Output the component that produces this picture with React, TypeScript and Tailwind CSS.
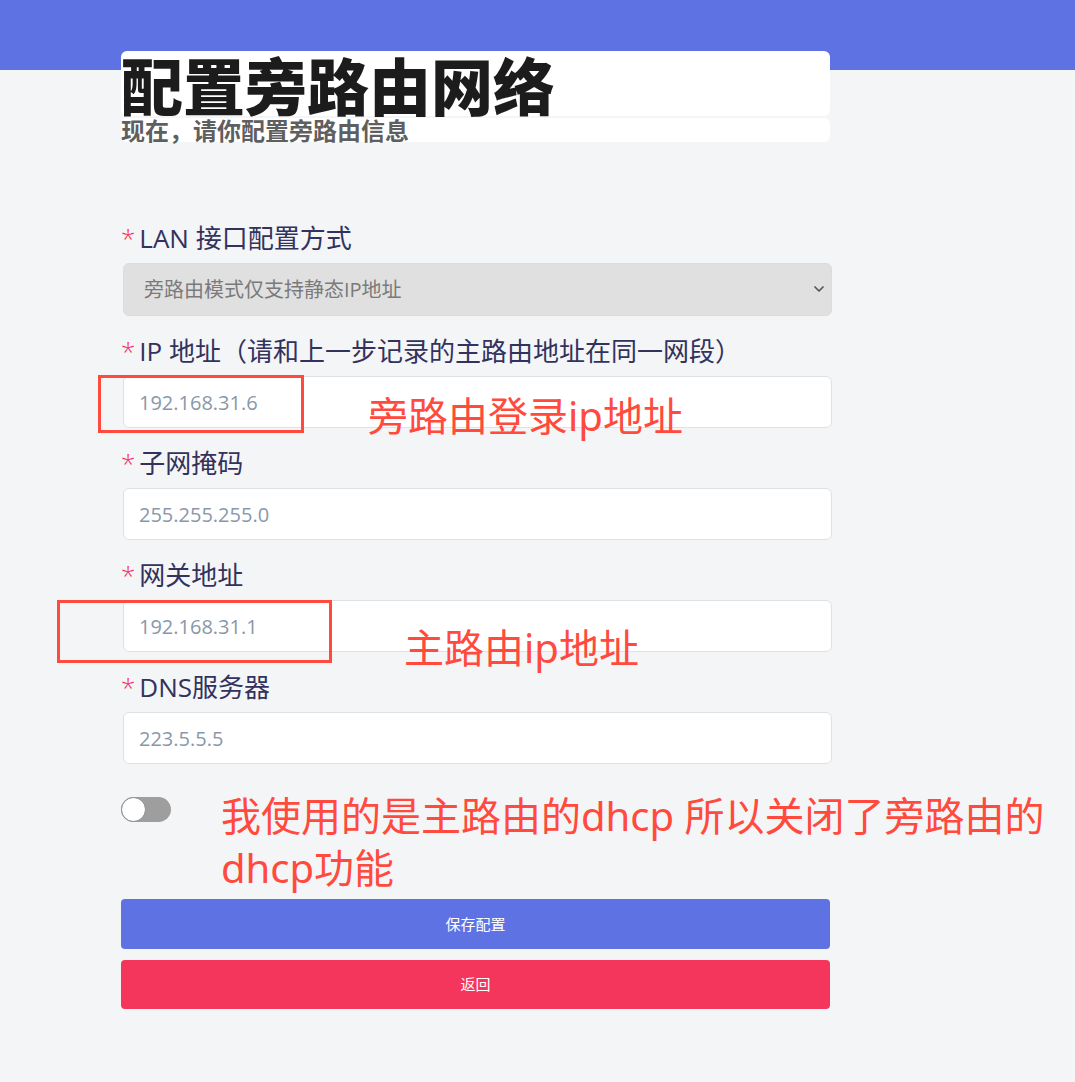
import React from "react"
import { ChevronDown } from "lucide-react"

const FIELDS: { label: string; placeholder: string }[] = [
  { label: "IP 地址（请和上一步记录的主路由地址在同一网段）", placeholder: "192.168.31.6" },
  { label: "子网掩码", placeholder: "255.255.255.0" },
  { label: "网关地址", placeholder: "192.168.31.1" },
  { label: "DNS服务器", placeholder: "223.5.5.5" },
]

const font = "font-['Open_Sans','Noto_Sans_CJK_SC',sans-serif]"

function Label({ text }: { text: string }) {
  return (
    <label className="block h-[30px] text-[26px] leading-[30px] text-[#32325d] mb-[10px] whitespace-nowrap">
      <span className="text-[#f5365c] font-light mr-[4px]">*</span>
      {text}
    </label>
  )
}

export default function App() {
  return (
    <div className={`relative min-h-[1082px] bg-[#f4f5f7] overflow-hidden ${font}`}>
      {/* header band */}
      <div className="h-[70px] bg-[#5e72e4]" />

      <div className="ml-[121px] w-[711px] -mt-[19px] pb-[73px]">
        {/* title */}
        <div className="w-[709px] h-[65px] rounded-md bg-white pt-[2px]">
          <h1 className="text-[62px] leading-[62px] font-black text-[#1c1c1c] whitespace-nowrap font-['Noto_Sans_CJK_SC',sans-serif]">
            配置旁路由网络
          </h1>
        </div>
        <div className="w-[709px] h-[24px] mt-[2px] rounded-md bg-white">
          <p className="text-[24px] leading-[24px] font-bold text-[#5f5f5f] whitespace-nowrap font-['Noto_Sans_CJK_SC',sans-serif]">
            现在，请你配置旁路由信息
          </p>
        </div>

        <form className="mt-[81px] flex flex-col gap-[20px]">
          <div>
            <Label text="LAN 接口配置方式" />
            <div className="relative ml-[2px] h-[53px] rounded-md border border-[#dcdcdc] bg-[#e0e0e0] flex items-center pl-[20px] text-[20px] text-[#7a7a7a]">
              旁路由模式仅支持静态IP地址
              <ChevronDown className="absolute right-[4px] top-[17px] w-[16px] h-[16px] text-[#555]" strokeWidth={2.6} />
            </div>
          </div>

          {FIELDS.map((f) => (
            <div key={f.label}>
              <Label text={f.label} />
              <input
                className="ml-[2px] w-[709px] h-[52px] rounded-md border border-[#dee2e6] bg-white px-[15px] text-[20px] text-[#8898aa] placeholder:text-[#8898aa] outline-none"
                placeholder={f.placeholder}
              />
            </div>
          ))}
        </form>

        {/* dhcp switch */}
        <div className="mt-[33px] w-[50px] h-[25px] rounded-full bg-[#9e9e9e] flex items-center">
          <div className="w-[25px] h-[25px] rounded-full bg-white border border-[#8a8a8a]" />
        </div>

        <div className="mt-[77px] flex flex-col gap-[11px] w-[709px] font-['Noto_Sans_CJK_SC',sans-serif]">
          <button className="h-[50px] rounded-[4px] bg-[#5e72e4] text-white text-[15px]">保存配置</button>
          <button className="h-[49px] rounded-[4px] bg-[#f5365c] text-white text-[15px]">返回</button>
        </div>
      </div>

      {/* annotations drawn on top of the screenshot */}
      <div className="absolute left-[98px] top-[375px] w-[206px] h-[58px] border-[3px] border-[#ff4a3d]" />
      <div className="absolute left-[57px] top-[600px] w-[275px] h-[63px] border-[3px] border-[#ff4a3d]" />
      <div className="absolute left-[368px] top-[396px] text-[40px] leading-[40px] text-[#ff4a3d] whitespace-nowrap font-['Noto_Sans','Noto_Sans_CJK_SC',sans-serif]">
        旁路由登录ip地址
      </div>
      <div className="absolute left-[404px] top-[628px] text-[40px] leading-[40px] text-[#ff4a3d] whitespace-nowrap font-['Noto_Sans','Noto_Sans_CJK_SC',sans-serif]">
        主路由ip地址
      </div>
      <div className="absolute left-[221px] top-[790px] text-[40px] leading-[52px] text-[#ff4a3d] whitespace-nowrap font-['Noto_Sans','Noto_Sans_CJK_SC',sans-serif]">
        我使用的是主路由的dhcp 所以关闭了旁路由的
        <br />
        dhcp功能
      </div>
    </div>
  )
}
